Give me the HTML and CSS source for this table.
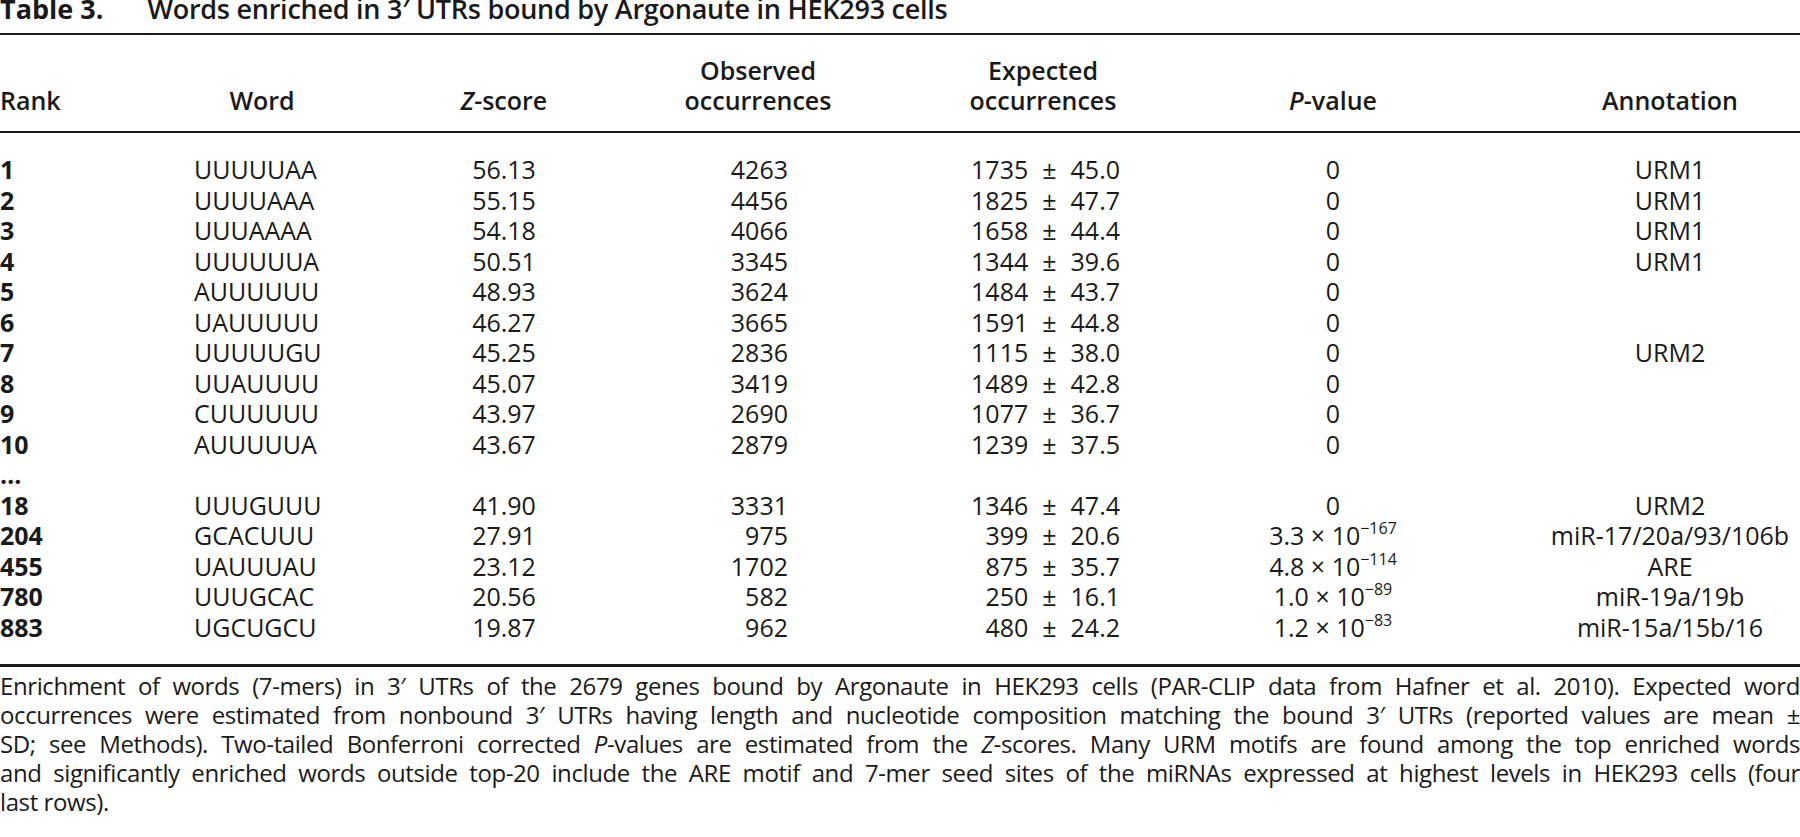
FILE: index.html
```html
<!DOCTYPE html>
<html lang="en">
<head>
<meta charset="utf-8">
<title>Table 3. Words enriched in 3′ UTRs bound by Argonaute in HEK293 cells</title>
<link rel="stylesheet" href="styles.css">
</head>
<body>
<div class="page">
  <div class="title"><span class="label">Table 3.</span>Words enriched in 3′ UTRs bound by Argonaute in HEK293 cells</div>
  <table class="words">
    <colgroup>
      <col class="w-rank"><col class="w-word"><col class="w-z"><col class="w-obs"><col class="w-exp"><col class="w-p"><col class="w-ann">
    </colgroup>
    <thead>
      <tr>
        <th class="c-rank">Rank</th>
        <th class="c-word">Word</th>
        <th class="c-z"><i>Z</i>-score</th>
        <th class="c-obs">Observed<br>occurrences</th>
        <th class="c-exp">Expected<br>occurrences</th>
        <th class="c-p"><i>P</i>-value</th>
        <th class="c-ann">Annotation</th>
      </tr>
    </thead>
    <tbody>
      <tr><td class="c-rank">1</td><td class="c-word">UUUUUAA</td><td class="c-z">56.13</td><td class="c-obs">4263</td><td class="c-exp">1735 ± 45.0</td><td class="c-p">0</td><td class="c-ann">URM1</td></tr>
      <tr><td class="c-rank">2</td><td class="c-word">UUUUAAA</td><td class="c-z">55.15</td><td class="c-obs">4456</td><td class="c-exp">1825 ± 47.7</td><td class="c-p">0</td><td class="c-ann">URM1</td></tr>
      <tr><td class="c-rank">3</td><td class="c-word">UUUAAAA</td><td class="c-z">54.18</td><td class="c-obs">4066</td><td class="c-exp">1658 ± 44.4</td><td class="c-p">0</td><td class="c-ann">URM1</td></tr>
      <tr><td class="c-rank">4</td><td class="c-word">UUUUUUA</td><td class="c-z">50.51</td><td class="c-obs">3345</td><td class="c-exp">1344 ± 39.6</td><td class="c-p">0</td><td class="c-ann">URM1</td></tr>
      <tr><td class="c-rank">5</td><td class="c-word">AUUUUUU</td><td class="c-z">48.93</td><td class="c-obs">3624</td><td class="c-exp">1484 ± 43.7</td><td class="c-p">0</td><td class="c-ann"></td></tr>
      <tr><td class="c-rank">6</td><td class="c-word">UAUUUUU</td><td class="c-z">46.27</td><td class="c-obs">3665</td><td class="c-exp">1591 ± 44.8</td><td class="c-p">0</td><td class="c-ann"></td></tr>
      <tr><td class="c-rank">7</td><td class="c-word">UUUUUGU</td><td class="c-z">45.25</td><td class="c-obs">2836</td><td class="c-exp">1115 ± 38.0</td><td class="c-p">0</td><td class="c-ann">URM2</td></tr>
      <tr><td class="c-rank">8</td><td class="c-word">UUAUUUU</td><td class="c-z">45.07</td><td class="c-obs">3419</td><td class="c-exp">1489 ± 42.8</td><td class="c-p">0</td><td class="c-ann"></td></tr>
      <tr><td class="c-rank">9</td><td class="c-word">CUUUUUU</td><td class="c-z">43.97</td><td class="c-obs">2690</td><td class="c-exp">1077 ± 36.7</td><td class="c-p">0</td><td class="c-ann"></td></tr>
      <tr><td class="c-rank">10</td><td class="c-word">AUUUUUA</td><td class="c-z">43.67</td><td class="c-obs">2879</td><td class="c-exp">1239 ± 37.5</td><td class="c-p">0</td><td class="c-ann"></td></tr>
      <tr><td class="c-rank">…</td><td class="c-word"></td><td class="c-z"></td><td class="c-obs"></td><td class="c-exp"></td><td class="c-p"></td><td class="c-ann"></td></tr>
      <tr><td class="c-rank">18</td><td class="c-word">UUUGUUU</td><td class="c-z">41.90</td><td class="c-obs">3331</td><td class="c-exp">1346 ± 47.4</td><td class="c-p">0</td><td class="c-ann">URM2</td></tr>
      <tr><td class="c-rank">204</td><td class="c-word">GCACUUU</td><td class="c-z">27.91</td><td class="c-obs">975</td><td class="c-exp">399 ± 20.6</td><td class="c-p">3.3 × 10<sup>−167</sup></td><td class="c-ann">miR-17/20a/93/106b</td></tr>
      <tr><td class="c-rank">455</td><td class="c-word">UAUUUAU</td><td class="c-z">23.12</td><td class="c-obs">1702</td><td class="c-exp">875 ± 35.7</td><td class="c-p">4.8 × 10<sup>−114</sup></td><td class="c-ann">ARE</td></tr>
      <tr><td class="c-rank">780</td><td class="c-word">UUUGCAC</td><td class="c-z">20.56</td><td class="c-obs">582</td><td class="c-exp">250 ± 16.1</td><td class="c-p">1.0 × 10<sup>−89</sup></td><td class="c-ann">miR-19a/19b</td></tr>
      <tr><td class="c-rank">883</td><td class="c-word">UGCUGCU</td><td class="c-z">19.87</td><td class="c-obs">962</td><td class="c-exp">480 ± 24.2</td><td class="c-p">1.2 × 10<sup>−83</sup></td><td class="c-ann">miR-15a/15b/16</td></tr>
    </tbody>
  </table>
  <p class="note">
    <span class="ln">Enrichment of words (7-mers) in 3′ UTRs of the 2679 genes bound by Argonaute in HEK293 cells (PAR-CLIP data from Hafner et al. 2010). Expected word</span>
    <span class="ln">occurrences were estimated from nonbound 3′ UTRs having length and nucleotide composition matching the bound 3′ UTRs (reported values are mean ±</span>
    <span class="ln">SD; see Methods). Two-tailed Bonferroni corrected <i>P</i>-values are estimated from the <i>Z</i>-scores. Many URM motifs are found among the top enriched words</span>
    <span class="ln">and significantly enriched words outside top-20 include the ARE motif and 7-mer seed sites of the miRNAs expressed at highest levels in HEK293 cells (four</span>
    <span class="ln end">last rows).</span>
  </p>
</div>
</body>
</html>
```

FILE: styles.css
```css
html, body {
  margin: 0;
  padding: 0;
  background: #ffffff;
}

body {
  color: #1a1a1a;
  font-family: "Open Sans", "Noto Sans", "Liberation Sans", sans-serif;
}

.page {
  width: 1800px;
}

.title {
  font-size: 27px;
  line-height: 17px;
  font-weight: 600;
  letter-spacing: -0.25px;
  padding-bottom: 16px;
  white-space: nowrap;
}

.title .label {
  font-weight: 700;
  letter-spacing: 0;
  margin-right: 44px;
}

.words {
  width: 1800px;
  table-layout: fixed;
  border-collapse: collapse;
  border-top: 2px solid #1a1a1a;
  border-bottom: 3px solid #1a1a1a;
  font-size: 25px;
}

.w-rank { width: 194px; }
.w-word { width: 136px; }
.w-z { width: 348px; }
.w-obs { width: 160px; }
.w-exp { width: 400px; }
.w-p { width: 190px; }
.w-ann { width: 372px; }

.words th {
  font-weight: 600;
  line-height: 30px;
  vertical-align: bottom;
  padding: 20px 0 16px;
  border-bottom: 2px solid #1a1a1a;
  text-align: center;
  white-space: nowrap;
}

.words td {
  line-height: 30.5px;
  padding: 0;
  white-space: nowrap;
  text-align: center;
}

.words tbody tr:first-child td {
  padding-top: 21px;
}

.words tbody tr:last-child td {
  padding-bottom: 22px;
}

.words .c-rank {
  text-align: left;
}

.words td.c-rank {
  font-weight: 700;
}

.words td.c-word {
  text-align: left;
}

.words td.c-obs {
  text-align: right;
  padding-right: 50px;
}

.words th.c-exp {
  padding-left: 10px;
}

.words td.c-exp {
  text-align: right;
  padding-right: 118px;
  word-spacing: 0.3em;
}

.words .c-ann {
  padding-left: 112px;
}

.words sup {
  font-size: 16px;
  line-height: 0;
  vertical-align: 11px;
}

.note {
  margin: 4px 0 0;
  font-size: 24px;
  line-height: 29px;
  letter-spacing: -0.4px;
}

.note .ln {
  display: block;
  text-align: justify;
  text-align-last: justify;
}

.note .ln.end {
  text-align-last: left;
}
```
